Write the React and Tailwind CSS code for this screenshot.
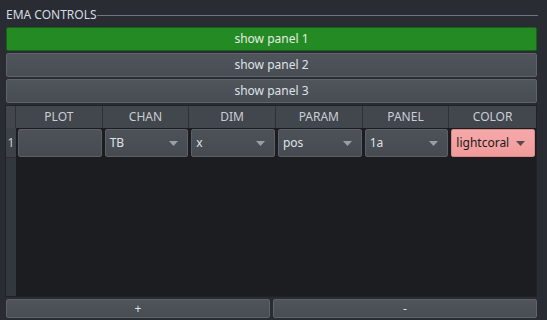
import React from "react";

const cols = ["PLOT", "CHAN", "DIM", "PARAM", "PANEL", "COLOR"];

function Arrow({ color = "#9a9ea5" }) {
  return (
    <svg width="9" height="5" viewBox="0 0 9 5" className="shrink-0">
      <path d="M0 0 H9 L4.5 5 Z" fill={color} />
    </svg>
  );
}

function Combo({ text, coral }) {
  return (
    <div className="flex h-[30px] items-center pl-[2px] pr-[1px]">
      <div
        className={
          coral
            ? "flex h-[28px] w-full items-center justify-between rounded-[2px] border border-[#d98888] bg-gradient-to-b from-[#f6a9a9] to-[#f19b9b] pl-[4px] pr-[9px] text-[#1a1a1a]"
            : "flex h-[28px] w-full items-center justify-between rounded-[2px] border border-[#5b5f66] bg-gradient-to-b from-[#4d5158] to-[#464a51] pl-[4px] pr-[9px] text-[#dfe3e8]"
        }
      >
        <span>{text}</span>
        <Arrow color={coral ? "#5a4848" : "#9a9ea5"} />
      </div>
    </div>
  );
}

function Btn({ children, green }) {
  return (
    <div
      className={
        green
          ? "flex h-[24px] items-center justify-center rounded-[2px] border border-[#176217] bg-[#248a24] text-[#e6ece6]"
          : "flex h-[24px] items-center justify-center rounded-[2px] border border-[#5e6269] bg-gradient-to-b from-[#50545b] to-[#484c53] text-[#dfe3e8]"
      }
    >
      {children}
    </div>
  );
}

export default function App() {
  return (
    <div
      className="flex h-[320px] w-[547px] flex-col overflow-hidden bg-[#292c33] pl-[5px] pr-[10px] text-[12px] leading-[16px]"
      style={{ fontFamily: '"Noto Sans", "Open Sans", sans-serif' }}
    >
      <div className="flex h-[27px] items-start pt-[7px]">
        <span className="pl-[1px] text-[#d6dbe1]">EMA CONTROLS</span>
        <div className="-mr-[1px] mt-[8px] h-px flex-1 bg-[#71767e]" />
      </div>
      <div className="flex flex-col gap-[2px] pl-[1px]">
        <Btn green>show panel 1</Btn>
        <Btn>show panel 2</Btn>
        <Btn>show panel 3</Btn>
      </div>
      <div className="mt-[2px] flex h-[192px] flex-col border border-[#1f2227] bg-[#1b1d21]">
        <div className="grid h-[22px] grid-cols-[10px_repeat(6,1fr)] bg-[#42464d] text-[#c9ced4]">
          <div className="border-r border-[#2e3137]" />
          {cols.map((c) => (
            <div
              key={c}
              className="flex items-center justify-center border-r border-[#2e3137] last:border-r-0"
            >
              {c}
            </div>
          ))}
        </div>
        <div className="flex flex-1">
          <div className="flex w-[10px] flex-col bg-[#33373e]">
            <div className="flex h-[30px] items-center justify-center border-b border-[#2a2d33] bg-[#3d4148] text-[#c9ced4]">
              1
            </div>
          </div>
          <div className="grid h-[30px] flex-1 grid-cols-6">
            <div className="flex h-[30px] items-center pl-[2px] pr-[1px]">
              <div className="h-[28px] w-full rounded-[2px] border border-[#5b5f66] bg-gradient-to-b from-[#4d5158] to-[#464a51]" />
            </div>
            <Combo text="TB" />
            <Combo text="x" />
            <Combo text="pos" />
            <Combo text="1a" />
            <Combo text="lightcoral" coral />
          </div>
        </div>
      </div>
      <div className="mt-[2px] flex gap-[3px] pl-[1px]">
        <div className="flex h-[19px] flex-1 items-center justify-center rounded-[2px] border border-[#5e6269] bg-gradient-to-b from-[#50545b] to-[#484c53] text-[#dfe3e8]">
          +
        </div>
        <div className="flex h-[19px] flex-1 items-center justify-center rounded-[2px] border border-[#5e6269] bg-gradient-to-b from-[#50545b] to-[#484c53] text-[#dfe3e8]">
          -
        </div>
      </div>
    </div>
  );
}
